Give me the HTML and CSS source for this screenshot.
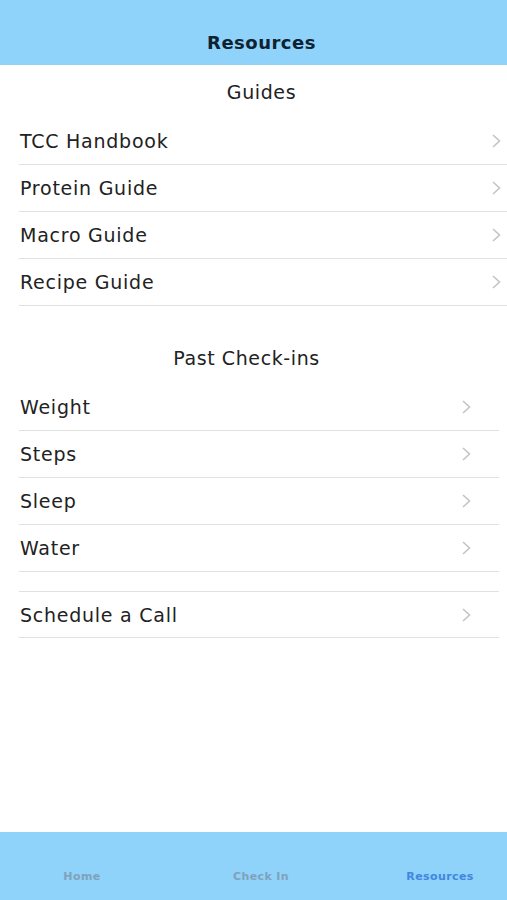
FILE: index.html
```html
<!DOCTYPE html>
<html lang="en">
<head>
    <meta charset="UTF-8">
    <meta name="viewport" content="width=device-width, initial-scale=1.0">
    <title>Resources</title>
    <link rel="stylesheet" href="styles.css">
</head>
<body>
    <div id="app">
        <header class="nav-bar">
            <h1>Resources</h1>
        </header>

        <main class="content">
            <section class="group">
                <h2 class="group-title title-guides">Guides</h2>
                <ul class="list list-full">
                    <li class="row"><span>TCC Handbook</span><svg class="chevron" viewBox="0 0 9 14"><polyline points="1,1 7.5,7 1,13"/></svg></li>
                    <li class="row"><span>Protein Guide</span><svg class="chevron" viewBox="0 0 9 14"><polyline points="1,1 7.5,7 1,13"/></svg></li>
                    <li class="row"><span>Macro Guide</span><svg class="chevron" viewBox="0 0 9 14"><polyline points="1,1 7.5,7 1,13"/></svg></li>
                    <li class="row"><span>Recipe Guide</span><svg class="chevron" viewBox="0 0 9 14"><polyline points="1,1 7.5,7 1,13"/></svg></li>
                </ul>
            </section>

            <section class="group group-spaced">
                <h2 class="group-title title-checkins">Past Check-ins</h2>
                <ul class="list list-inset">
                    <li class="row"><span>Weight</span><svg class="chevron" viewBox="0 0 9 14"><polyline points="1,1 7.5,7 1,13"/></svg></li>
                    <li class="row"><span>Steps</span><svg class="chevron" viewBox="0 0 9 14"><polyline points="1,1 7.5,7 1,13"/></svg></li>
                    <li class="row"><span>Sleep</span><svg class="chevron" viewBox="0 0 9 14"><polyline points="1,1 7.5,7 1,13"/></svg></li>
                    <li class="row"><span>Water</span><svg class="chevron" viewBox="0 0 9 14"><polyline points="1,1 7.5,7 1,13"/></svg></li>
                </ul>
                <ul class="list list-inset list-top">
                    <li class="row"><span>Schedule a Call</span><svg class="chevron" viewBox="0 0 9 14"><polyline points="1,1 7.5,7 1,13"/></svg></li>
                </ul>
            </section>
        </main>

        <nav class="tab-bar">
            <a class="tab">Home</a>
            <a class="tab">Check In</a>
            <a class="tab tab-active">Resources</a>
        </nav>
    </div>
</body>
</html>
```

FILE: styles.css
```css
*{
    margin:0;
    padding:0;
    box-sizing:border-box;
    font-family:"DejaVu Sans", sans-serif;
}

body{
    background-color:#fff;
}

#app{
    display:flex;
    flex-direction:column;
    height:900px;
    width:507px;
}

.nav-bar{
    height:65px;
    padding-top:20px;
    padding-left:16px;
    background-color:#8fd2fa;
    display:flex;
    justify-content:center;
    align-items:center;
}
.nav-bar h1{
    font-size:18px;
    font-weight:bold;
    letter-spacing:0.5px;
    color:#0d2233;
}

.content{
    flex:1;
}

.group-title{
    height:53px;
    display:flex;
    justify-content:center;
    align-items:center;
    font-size:19px;
    font-weight:normal;
    letter-spacing:0.6px;
    color:#222;
}
.title-guides{
    padding-left:16px;
}
.title-checkins{
    padding-right:14px;
}

.group-spaced{
    margin-top:25px;
}

.list{
    list-style:none;
    margin-left:19px;
}
.list-inset{
    margin-right:8px;
}
.list-inset .row{
    padding-right:28px;
}
.list-full .row{
    padding-right:6px;
}
.list-top{
    margin-top:19px;
    border-top:1px solid #e1e1e1;
}

.row{
    height:47px;
    display:flex;
    justify-content:space-between;
    align-items:center;
    padding-left:1px;
    border-bottom:1px solid #e1e1e1;
    font-size:19px;
    letter-spacing:0.75px;
    color:#222;
}
.list-top .row{
    height:46px;
}

.chevron{
    width:9px;
    height:14px;
    fill:none;
    stroke:#c4c4c8;
    stroke-width:1.6;
}

.tab-bar{
    height:68px;
    background-color:#8fd2fa;
    display:flex;
    align-items:center;
    gap:49px;
    padding-top:20px;
    padding-left:17px;
}
.tab{
    width:130px;
    flex:none;
    text-align:center;
    font-size:11px;
    font-weight:bold;
    letter-spacing:0.4px;
    color:#7fa2bb;
}
.tab-active{
    color:#3f87df;
}
```
